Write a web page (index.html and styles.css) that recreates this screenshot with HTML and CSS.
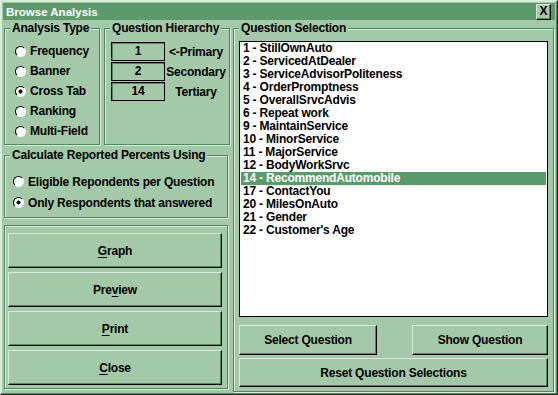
FILE: index.html
```html
<!DOCTYPE html>
<html>
<head>
<meta charset="utf-8">
<title>Browse Analysis</title>
<link rel="stylesheet" href="styles.css">
</head>
<body>
<div class="window">
  <div class="titlebar">
    <span class="title">Browse Analysis</span>
    <span class="close">X</span>
  </div>
  <div class="main">
    <div class="left">
      <div class="toprow">
        <fieldset class="group analysis">
          <legend>Analysis Type</legend>
          <div class="radios">
            <div class="radio"><span class="dot"></span>Frequency</div>
            <div class="radio"><span class="dot"></span>Banner</div>
            <div class="radio"><span class="dot on"></span>Cross Tab</div>
            <div class="radio"><span class="dot"></span>Ranking</div>
            <div class="radio"><span class="dot"></span>Multi-Field</div>
          </div>
        </fieldset>
        <fieldset class="group hierarchy">
          <legend>Question Hierarchy</legend>
          <div class="hrows">
            <div class="hrow"><span class="hbox">1</span><span class="hlabel">&lt;-Primary</span></div>
            <div class="hrow"><span class="hbox">2</span><span class="hlabel">Secondary</span></div>
            <div class="hrow"><span class="hbox">14</span><span class="hlabel">Tertiary</span></div>
          </div>
        </fieldset>
      </div>
      <fieldset class="group calc">
        <legend>Calculate Reported Percents Using</legend>
        <div class="radios calc-radios">
          <div class="radio"><span class="dot"></span>Eligible Repondents per Question</div>
          <div class="radio"><span class="dot on"></span>Only Respondents that answered</div>
        </div>
      </fieldset>
      <div class="panel">
        <button class="btn big"><u>G</u>raph</button>
        <button class="btn big">Pre<u>v</u>iew</button>
        <button class="btn big"><u>P</u>rint</button>
        <button class="btn big"><u>C</u>lose</button>
      </div>
    </div>
    <fieldset class="group selection">
      <legend>Question Selection</legend>
      <div class="selbody">
        <ul class="list">
          <li>1 - StillOwnAuto</li>
          <li>2 - ServicedAtDealer</li>
          <li>3 - ServiceAdvisorPoliteness</li>
          <li>4 - OrderPromptness</li>
          <li>5 - OverallSrvcAdvis</li>
          <li>6 - Repeat work</li>
          <li>9 - MaintainService</li>
          <li>10 - MinorService</li>
          <li>11 - MajorService</li>
          <li>12 - BodyWorkSrvc</li>
          <li class="sel">14 - RecommendAutomobile</li>
          <li>17 - ContactYou</li>
          <li>20 - MilesOnAuto</li>
          <li>21 - Gender</li>
          <li>22 - Customer's Age</li>
        </ul>
        <div class="brow">
          <button class="btn sel-btn">Select Question</button>
          <button class="btn show-btn">Show Question</button>
        </div>
        <button class="btn reset">Reset Question Selections</button>
      </div>
    </fieldset>
  </div>
</div>
</body>
</html>
```

FILE: styles.css
```css
:root {
  --bg: #a3c9a9;
  --dark: #4f8a5e;
  --light: #d8ecda;
  --title: #5b9a6b;
  --black: #000;
}

* { box-sizing: border-box; }

html, body {
  margin: 0;
  padding: 0;
  background: var(--bg);
}

body {
  font-family: "Liberation Sans", Arial, sans-serif;
  font-weight: bold;
  font-size: 12px;
  letter-spacing: -0.2px;
  color: #000;
}

.window {
  width: 558px;
  height: 395px;
  background: var(--bg);
  border: 1px solid;
  border-color: var(--light) #1c3322 #1c3322 var(--light);
  box-shadow: inset -1px -1px 0 var(--dark), inset 1px 1px 0 var(--light);
  padding: 2px;
  display: flex;
  flex-direction: column;
}

.titlebar {
  height: 17px;
  background: var(--title);
  color: #fff;
  display: flex;
  align-items: flex-start;
  font-size: 11.5px;
  letter-spacing: 0;
  padding-left: 3px;
}

.title {
  line-height: 16px;
  padding-top: 1px;
}

.close {
  margin-left: auto;
  margin-right: 4px;
  margin-top: 1px;
  width: 15px;
  height: 16px;
  background: var(--bg);
  color: #000;
  border: 1px solid;
  border-color: var(--light) #000 #000 var(--light);
  box-shadow: inset -1px -1px 0 var(--dark);
  font-size: 12px;
  line-height: 13px;
  text-align: center;
}

.main {
  display: flex;
  gap: 3px;
  margin-top: 2px;
  padding-left: 1px;
  flex: 1;
}

.left {
  width: 226px;
  display: flex;
  flex-direction: column;
}

.toprow {
  display: flex;
  gap: 4px;
}

.group {
  margin: 0;
  padding: 0;
  min-width: 0;
  border: 1px solid var(--dark);
  box-shadow: inset 1px 1px 0 var(--light), 1px 1px 0 var(--light);
}

.group legend {
  margin-left: 5px;
  padding: 0 2px;
  line-height: 13px;
  background: var(--bg);
}

.analysis {
  width: 96px;
}

.radios {
  padding: 6px 0 3px 10px;
  display: flex;
  flex-direction: column;
}

.radio {
  height: 20px;
  display: flex;
  align-items: center;
  gap: 4px;
  white-space: nowrap;
}

.dot {
  width: 11px;
  height: 11px;
  border-radius: 50%;
  border: 1px solid;
  border-color: #000 #eef7ef #eef7ef #000;
  background: #fff;
  flex: none;
}

.dot.on {
  background: radial-gradient(circle, #000 0 1.8px, #fff 2.3px);
}

.hierarchy {
  flex: 1;
}

.hrows {
  padding: 7px 0 0 6px;
  display: flex;
  flex-direction: column;
  gap: 1px;
}

.hrow {
  display: flex;
  align-items: center;
  height: 19px;
}

.hbox {
  width: 54px;
  height: 19px;
  border: 1px solid #000;
  box-shadow: inset 1px 1px 0 var(--dark);
  text-align: center;
  line-height: 16px;
}

.hlabel {
  width: 62px;
  text-align: center;
}

.calc {
  margin-top: 4px;
  margin-right: 2px;
}

.calc-radios {
  padding: 9px 0 4px 8px;
}

.calc-radios .radio {
  height: 21px;
}

.panel {
  margin-top: 7px;
  margin-right: 2px;
  border: 1px solid var(--dark);
  box-shadow: inset 1px 1px 0 var(--light), 1px 1px 0 var(--light);
  padding: 7px 5px 3px 3px;
  display: flex;
  flex-direction: column;
  gap: 4px;
}

.btn {
  font: inherit;
  letter-spacing: inherit;
  color: #000;
  background: var(--bg);
  border: 1px solid;
  border-color: var(--light) #000 #000 var(--light);
  box-shadow: inset -1px -1px 0 var(--dark);
  padding: 0;
  margin: 0;
  text-align: center;
  border-radius: 0;
}

.btn u {
  text-underline-offset: 2px;
}

.big {
  height: 35px;
}

.selection {
  width: 321px;
}

.selbody {
  padding: 6px 5px 2px 5px;
  display: flex;
  flex-direction: column;
}

.list {
  list-style: none;
  margin: 0;
  padding: 0 1px;
  height: 276px;
  background: #fff;
  border: 1px solid #000;
}

.list li {
  height: 13px;
  line-height: 13px;
  padding-left: 2px;
  white-space: nowrap;
}

.list li.sel {
  background: var(--title);
  color: #fff;
}

.brow {
  display: flex;
  justify-content: space-between;
  margin-top: 8px;
}

.sel-btn {
  width: 138px;
  height: 30px;
}

.show-btn {
  width: 136px;
  height: 30px;
}

.reset {
  margin-top: 3px;
  height: 29px;
}
```
